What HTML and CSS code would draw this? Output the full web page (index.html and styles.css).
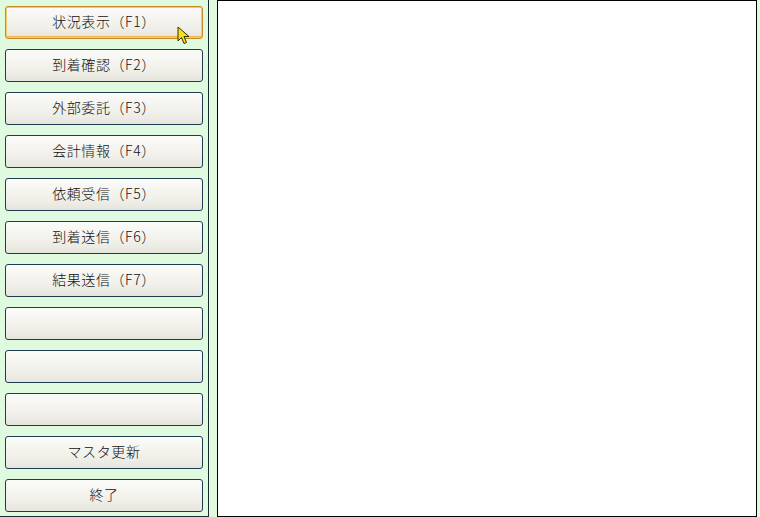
FILE: index.html
```html
<!DOCTYPE html>
<html lang="ja">
<head>
  <meta charset="UTF-8">
  <title>メニュー</title>
  <link rel="stylesheet" href="styles.css">
</head>
<body>
<div class="screen">
  <div class="menu"><!--ボタン列-->
    <button class="btn hot">状況表示（F1）</button>
    <button class="btn">到着確認（F2）</button>
    <button class="btn">外部委託（F3）</button>
    <button class="btn">会計情報（F4）</button>
    <button class="btn">依頼受信（F5）</button>
    <button class="btn">到着送信（F6）</button>
    <button class="btn">結果送信（F7）</button>
    <button class="btn"></button>
    <button class="btn"></button>
    <button class="btn"></button>
    <button class="btn">マスタ更新</button>
    <button class="btn">終了</button>
  </div>
  <div class="view"></div>
  <!--マウスカーソル-->
  <svg class="cursor" width="14" height="20" viewBox="0 0 14 20">
    <path d="M1 1 L1 15 L4.5 11.5 L7 17.5 L9.5 16.5 L7 10.5 L12 10.5 Z" fill="#f4e020" stroke="#3a3000" stroke-width="1" stroke-linejoin="round"/>
  </svg>
</div>
</body>
</html>
```
FILE: styles.css
```css
* {
  margin: 0;
  padding: 0;
  box-sizing: border-box;
}

body {
  background-color: #e0fae0;
  font-family: "Noto Sans CJK JP", "Liberation Sans", sans-serif;
}

.screen {
  position: relative;
  width: 760px;
  height: 517px;
  display: flex;
}

.menu {
  width: 209px;
  height: 517px;
  padding: 6px 0 0 5px;
  border-right: 1px solid #1c2a30;
  border-bottom: 1px solid #1c2a30;
  display: flex;
  flex-direction: column;
  gap: 10px;
}

.btn {
  flex: none;
  width: 198px;
  height: 33px;
  padding-bottom: 2px;
  border: 1px solid #1f3b52;
  border-radius: 3px;
  background: linear-gradient(#fbfbf9, #f1f0ea 60%, #e6e5dd);
  color: #111;
  font-family: "Noto Sans CJK JP", sans-serif;
  font-size: 14px;
  font-weight: 300;
  letter-spacing: 0.6px;
  line-height: 29px;
  text-align: center;
}

.btn.hot {
  border-color: #c8892a;
  box-shadow: inset 0 0 0 1px #f6cc6a, inset 0 -1px 0 1px #eeb444;
}

.view {
  margin-left: 8px;
  width: 540px;
  height: 517px;
  border: 1px solid #000;
  background-color: #fff;
}

.cursor {
  position: absolute;
  left: 177px;
  top: 26px;
}
```
